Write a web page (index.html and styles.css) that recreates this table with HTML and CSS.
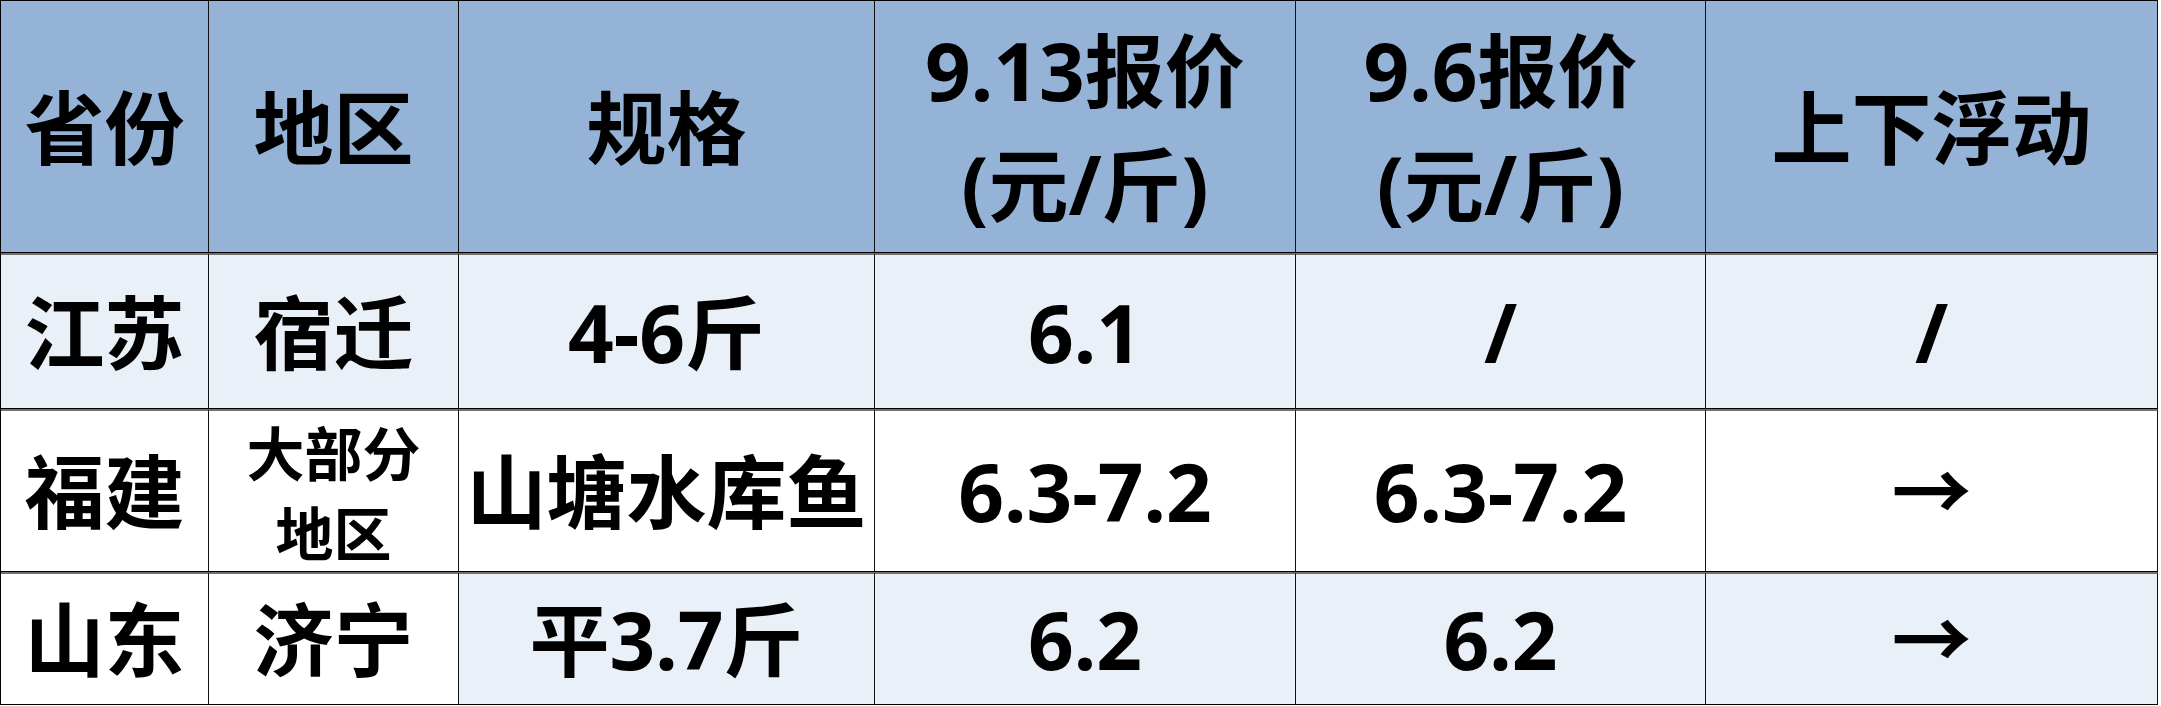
FILE: index.html
```html
<!DOCTYPE html>
<html lang="zh-CN">
<head>
<meta charset="utf-8">
<title>报价表</title>
<link rel="stylesheet" href="styles.css">
</head>
<body>
<div class="price-table" role="table">
  <div class="cell head">省份</div>
  <div class="cell head">地区</div>
  <div class="cell head">规格</div>
  <div class="cell head two">9.13报价<br>(元/斤)</div>
  <div class="cell head two">9.6报价<br>(元/斤)</div>
  <div class="cell head">上下浮动</div>

  <div class="cell body tint">江苏</div>
  <div class="cell body tint">宿迁</div>
  <div class="cell body tint">4-6斤</div>
  <div class="cell body tint">6.1</div>
  <div class="cell body tint">/</div>
  <div class="cell body tint">/</div>

  <div class="cell body">福建</div>
  <div class="cell body small">大部分<br>地区</div>
  <div class="cell body">山塘水库鱼</div>
  <div class="cell body">6.3-7.2</div>
  <div class="cell body">6.3-7.2</div>
  <div class="cell body arrow">→</div>

  <div class="cell body last">山东</div>
  <div class="cell body last">济宁</div>
  <div class="cell body last tint">平3.7斤</div>
  <div class="cell body last tint">6.2</div>
  <div class="cell body last tint">6.2</div>
  <div class="cell body last tint arrow">→</div>
</div>
</body>
</html>
```

FILE: styles.css
```css
html, body {
  margin: 0;
  padding: 0;
  background: #ffffff;
}

.price-table {
  box-sizing: border-box;
  display: grid;
  grid-template-columns: 208px 250px 416px 421px 410px 452px;
  grid-template-rows: 252px 156px 163px 133px;
  width: 2158px;
  border-top: 1px solid #000;
  border-left: 1px solid #000;
  font-family: "Noto Sans", "Noto Sans CJK SC", sans-serif;
  font-weight: 700;
  color: #000;
}

.cell {
  box-sizing: border-box;
  display: flex;
  align-items: center;
  justify-content: center;
  text-align: center;
  overflow: hidden;
  white-space: nowrap;
  font-size: 80px;
  line-height: 100px;
  border-right: 1.5px solid #111;
  background: #ffffff;
}

.head {
  background: #95b3d7;
  border-bottom: 1px solid #000;
  line-height: 114px;
}

.body {
  border-top: 2px solid #707070;
  border-bottom: 1px solid #000;
}

.tint {
  background: #eaf0f8;
}

.small {
  font-family: "Noto Sans CJK SC", sans-serif;
  font-size: 58px;
  line-height: 80px;
}

.arrow {
  font-family: "Noto Sans CJK SC", "Noto Sans", sans-serif;
  padding-bottom: 10px;
}
```
